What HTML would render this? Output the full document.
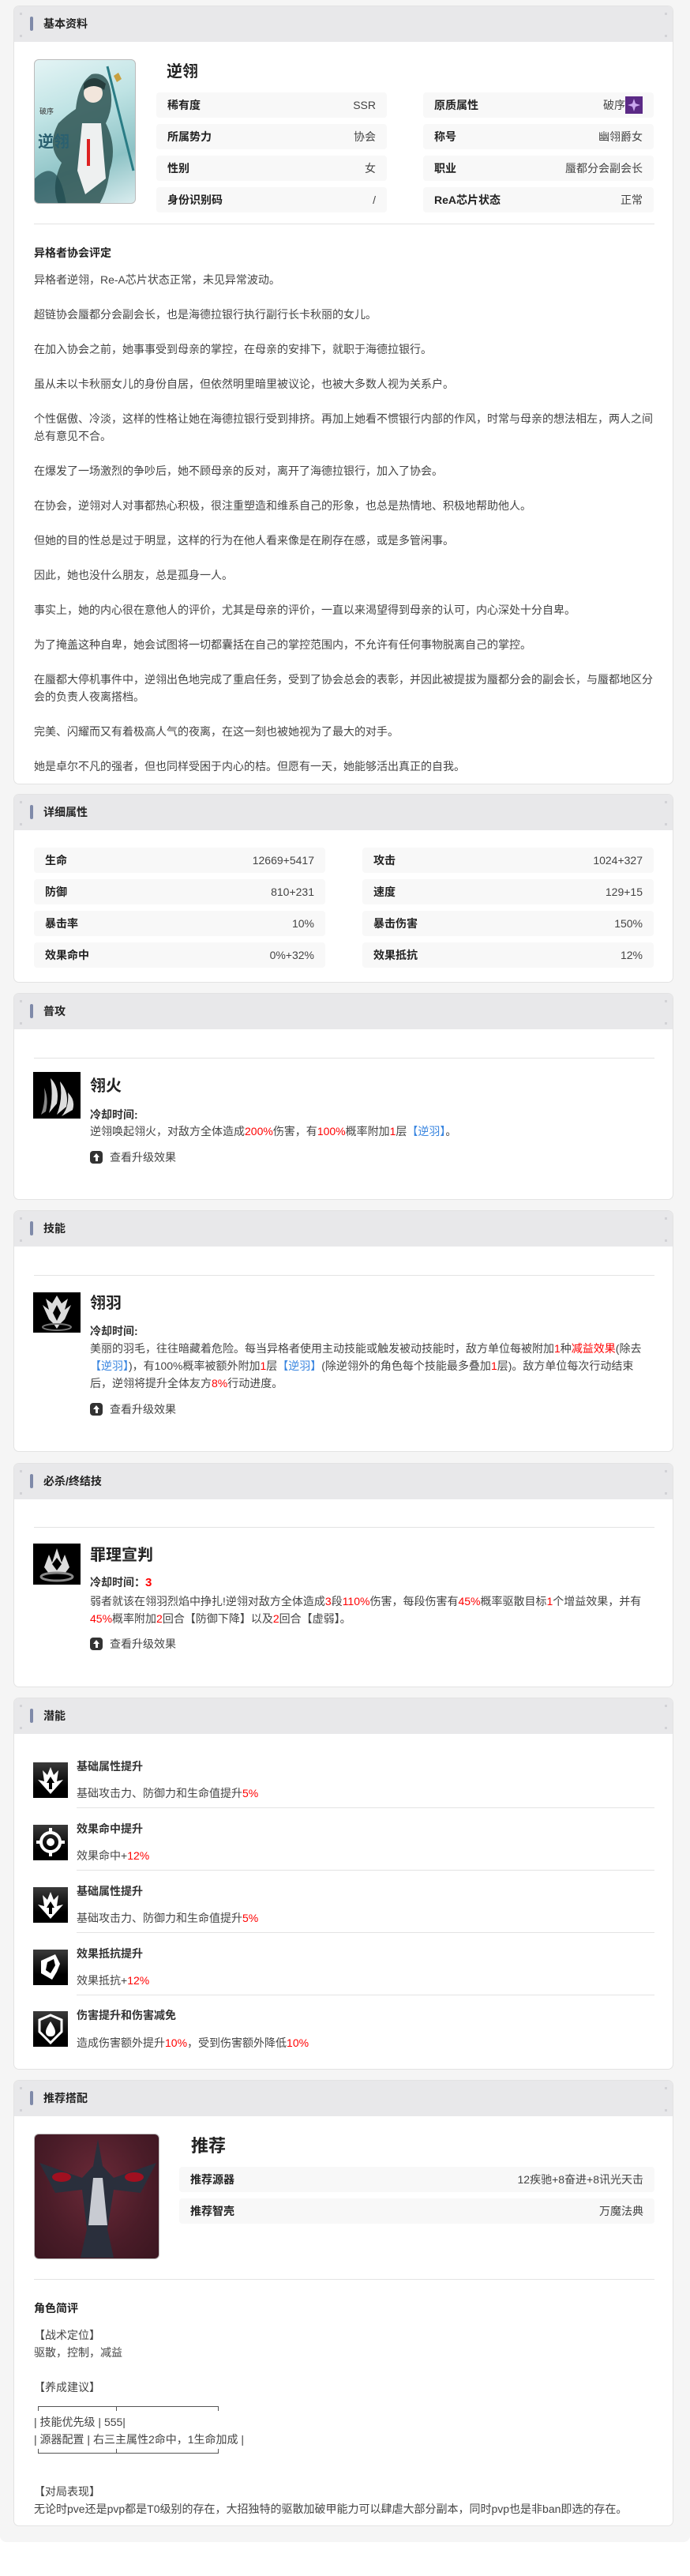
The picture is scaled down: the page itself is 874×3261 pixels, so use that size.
<!DOCTYPE html>
<html><head><meta charset="utf-8">
<style>
*{margin:0;padding:0;box-sizing:border-box}
body{width:874px;height:3261px;background:#fff;font-family:"Liberation Sans","Noto Sans CJK SC",sans-serif;color:#333;position:relative;overflow:hidden}
#bg{position:absolute;left:0;top:0;width:874px;height:3218px;background:#f5f5f5;border-radius:0 0 8px 8px}
.card{position:absolute;left:17px;width:836px;background:#fff;border:1px solid #e3e3e3;border-radius:7px;overflow:hidden}
.hd{position:absolute;left:0;top:0;width:100%;height:45px;background:#e8e8ea}
.hd .bar{position:absolute;left:20px;top:13px;width:4px;height:18px;border-radius:2px;background:#7f8aa9}
.hd .t{position:absolute;left:37px;top:11px;font-size:14px;font-weight:bold;line-height:22px;color:#222}
.hd .d{position:absolute;width:3px;height:3px;background:#d2d2d6}
.a{position:absolute;white-space:nowrap}
.row{position:absolute;height:32px;background:#f8f8f8;border-radius:4px;font-size:14px;line-height:32px}
.row b{position:absolute;left:14px;color:#222}
.row span{position:absolute;right:14px;color:#444}
.p{font-size:14px;line-height:22px;color:#444;white-space:nowrap}
.p div{margin-bottom:22px}
.line{position:absolute;height:1px;background:#e3e3e3}
.icon{position:absolute;background:#000;overflow:hidden}
.name{font-size:20px;font-weight:bold;color:#222;line-height:28px}
.cd{font-size:14px;font-weight:bold;color:#333;line-height:22px}
.desc{font-size:14px;line-height:22px;color:#444}
.r{color:#f00}.bl{color:#3a86e0}
.up{position:absolute;width:16px;height:16px;border-radius:4px;background:#333}
.up:after{content:"";position:absolute;left:4px;top:3px;border-left:4px solid transparent;border-right:4px solid transparent;border-bottom:5px solid #fff}
.up:before{content:"";position:absolute;left:6.5px;top:8px;width:3px;height:5px;background:#fff}
.pt{font-size:14px;font-weight:bold;line-height:22px;color:#333}
.pd{font-size:14px;line-height:22px;color:#444}
.picon{position:absolute;width:44px;height:45px;background:linear-gradient(#3a3a3a,#000 70%)}
</style></head><body>
<div id="bg"></div>

<div class="card" style="top:7px;height:986px">
 <div class="hd"><div class="d" style="left:7px;top:8px"></div><div class="d" style="left:7px;top:36px"></div><div class="d" style="right:7px;top:8px"></div><div class="d" style="right:7px;top:36px"></div><div class="bar"></div><div class="t">基本资料</div></div>
 <div style="position:absolute;left:25px;top:67px;width:129px;height:183px;border:1px solid #bbb;border-radius:6px;overflow:hidden;background:linear-gradient(160deg,#e4f4f5 0%,#bfe3e4 35%,#8ec3c6 70%,#d9ecee 100%)">
  <svg width="129" height="183" viewBox="0 0 129 183"><path d="M72 18 Q92 14 96 38 Q100 60 90 80 Q105 110 95 140 Q92 165 82 182 L30 182 Q20 160 34 130 Q14 110 30 80 Q40 70 52 62 Q55 30 72 18Z" fill="#2f5553" opacity=".85"/><circle cx="74" cy="42" r="12" fill="#f2e6dc"/><path d="M62 30 Q74 16 90 30 L88 38 Q74 28 62 38Z" fill="#263d3c"/><path d="M60 80 L84 80 L90 150 L64 170 L54 140Z" fill="#eef0f0"/><path d="M92 8 L125 140" stroke="#2a7c85" stroke-width="3"/><path d="M100 20 l6 -4 l4 8 l-6 4z" fill="#c8a040"/><rect x="66" y="100" width="4" height="34" fill="#d22"/><text x="6" y="68" font-size="9" fill="#333">破序</text><text x="4" y="110" font-size="20" font-weight="bold" fill="#2a6070">逆翎</text><path d="M0 150 Q30 120 40 183 L0 183Z" fill="#1e4a50" opacity=".7"/></svg>
 </div>
 <div class="a name" style="left:193px;top:69px">逆翎</div>
 <div class="row" style="left:180px;top:109px;width:292px"><b>稀有度</b><span>SSR</span></div>
 <div class="row" style="left:518px;top:109px;width:292px"><b>原质属性</b><span style="right:14px">破序<i style="display:inline-block;width:22px;height:22px;background:#5b2a86;vertical-align:middle;position:relative;top:-1px"><svg width="22" height="22"><path d="M11 3 L13 9 L19 11 L13 13 L11 19 L9 13 L3 11 L9 9Z" fill="#c9a6ee"/></svg></i></span></div>
 <div class="row" style="left:180px;top:149px;width:292px"><b>所属势力</b><span>协会</span></div>
 <div class="row" style="left:518px;top:149px;width:292px"><b>称号</b><span>幽翎爵女</span></div>
 <div class="row" style="left:180px;top:189px;width:292px"><b>性别</b><span>女</span></div>
 <div class="row" style="left:518px;top:189px;width:292px"><b>职业</b><span>蜃都分会副会长</span></div>
 <div class="row" style="left:180px;top:229px;width:292px"><b>身份识别码</b><span>/</span></div>
 <div class="row" style="left:518px;top:229px;width:292px"><b>ReA芯片状态</b><span>正常</span></div>
 <div class="line" style="left:25px;top:275px;width:786px"></div>
 <div class="a" style="left:25px;top:301px;font-size:14px;font-weight:bold;line-height:22px;color:#222">异格者协会评定</div>
 <div class="p" style="position:absolute;left:25px;top:335px;width:800px">
  <div>异格者逆翎，Re-A芯片状态正常，未见异常波动。</div>
  <div>超链协会蜃都分会副会长，也是海德拉银行执行副行长卡秋丽的女儿。</div>
  <div>在加入协会之前，她事事受到母亲的掌控，在母亲的安排下，就职于海德拉银行。</div>
  <div>虽从未以卡秋丽女儿的身份自居，但依然明里暗里被议论，也被大多数人视为关系户。</div>
  <div>个性倨傲、冷淡，这样的性格让她在海德拉银行受到排挤。再加上她看不惯银行内部的作风，时常与母亲的想法相左，两人之间<br>总有意见不合。</div>
  <div>在爆发了一场激烈的争吵后，她不顾母亲的反对，离开了海德拉银行，加入了协会。</div>
  <div>在协会，逆翎对人对事都热心积极，很注重塑造和维系自己的形象，也总是热情地、积极地帮助他人。</div>
  <div>但她的目的性总是过于明显，这样的行为在他人看来像是在刷存在感，或是多管闲事。</div>
  <div>因此，她也没什么朋友，总是孤身一人。</div>
  <div>事实上，她的内心很在意他人的评价，尤其是母亲的评价，一直以来渴望得到母亲的认可，内心深处十分自卑。</div>
  <div>为了掩盖这种自卑，她会试图将一切都囊括在自己的掌控范围内，不允许有任何事物脱离自己的掌控。</div>
  <div>在蜃都大停机事件中，逆翎出色地完成了重启任务，受到了协会总会的表彰，并因此被提拔为蜃都分会的副会长，与蜃都地区分<br>会的负责人夜离搭档。</div>
  <div>完美、闪耀而又有着极高人气的夜离，在这一刻也被她视为了最大的对手。</div>
  <div>她是卓尔不凡的强者，但也同样受困于内心的桔。但愿有一天，她能够活出真正的自我。</div>
 </div>
</div>

<div class="card" style="top:1005px;height:239px">
 <div class="hd"><div class="d" style="left:7px;top:8px"></div><div class="d" style="left:7px;top:36px"></div><div class="d" style="right:7px;top:8px"></div><div class="d" style="right:7px;top:36px"></div><div class="bar"></div><div class="t">详细属性</div></div>
 <div class="row" style="left:25px;top:67px;width:369px"><b>生命</b><span>12669+5417</span></div>
 <div class="row" style="left:441px;top:67px;width:369px"><b>攻击</b><span>1024+327</span></div>
 <div class="row" style="left:25px;top:107px;width:369px"><b>防御</b><span>810+231</span></div>
 <div class="row" style="left:441px;top:107px;width:369px"><b>速度</b><span>129+15</span></div>
 <div class="row" style="left:25px;top:147px;width:369px"><b>暴击率</b><span>10%</span></div>
 <div class="row" style="left:441px;top:147px;width:369px"><b>暴击伤害</b><span>150%</span></div>
 <div class="row" style="left:25px;top:187px;width:369px"><b>效果命中</b><span>0%+32%</span></div>
 <div class="row" style="left:441px;top:187px;width:369px"><b>效果抵抗</b><span>12%</span></div>
</div>

<div class="card" style="top:1257px;height:262px">
 <div class="hd"><div class="d" style="left:7px;top:8px"></div><div class="d" style="left:7px;top:36px"></div><div class="d" style="right:7px;top:8px"></div><div class="d" style="right:7px;top:36px"></div><div class="bar"></div><div class="t">普攻</div></div>
 <div class="line" style="left:25px;top:81px;width:786px"></div>
 <div class="icon" style="left:24px;top:99px;width:60px;height:59px"><svg width="60" height="59"><path d="M22 8 Q34 20 30 40 L20 52 Q26 34 22 8Z M34 12 Q46 26 42 44 L30 54 Q38 34 34 12Z M44 26 Q54 36 50 48 L36 56 Q46 44 44 26Z" fill="#ddd"/><path d="M14 20 Q20 34 16 50 L10 54 Q16 38 14 20Z" fill="#888"/></svg></div>
 <div class="a name" style="left:96px;top:103px">翎火</div>
 <div class="a cd" style="left:96px;top:142px">冷却时间:</div>
 <div class="a desc" style="left:96px;top:163px">逆翎唤起翎火，对敌方全体造成<span class="r">200%</span>伤害，有<span class="r">100%</span>概率附加<span class="r">1</span>层<span class="bl">【逆羽】</span>。</div>
 <div class="up" style="left:96px;top:199px"></div>
 <div class="a desc" style="left:121px;top:196px">查看升级效果</div>
</div>

<div class="card" style="top:1532px;height:306px">
 <div class="hd"><div class="d" style="left:7px;top:8px"></div><div class="d" style="left:7px;top:36px"></div><div class="d" style="right:7px;top:8px"></div><div class="d" style="right:7px;top:36px"></div><div class="bar"></div><div class="t">技能</div></div>
 <div class="line" style="left:25px;top:81px;width:786px"></div>
 <div class="icon" style="left:24px;top:103px;width:60px;height:51px"><svg width="60" height="51"><path d="M30 4 L36 14 L44 8 L40 22 L48 16 L40 34 L34 40 L30 46 L26 40 L20 34 L12 16 L20 22 L16 8 L24 14Z" fill="#ddd"/><path d="M30 16 L35 26 L30 36 L25 26Z" fill="#000"/><ellipse cx="30" cy="44" rx="18" ry="4" fill="none" stroke="#777" stroke-width="2"/></svg></div>
 <div class="a name" style="left:96px;top:103px">翎羽</div>
 <div class="a cd" style="left:96px;top:141px">冷却时间:</div>
 <div class="a desc" style="left:96px;top:163px">美丽的羽毛，往往暗藏着危险。每当异格者使用主动技能或触发被动技能时，敌方单位每被附加<span class="r">1</span>种<span class="r">减益效果</span>(除去<br><span class="bl">【逆羽】</span>)，有100%概率被额外附加<span class="r">1</span>层<span class="bl">【逆羽】</span>(除逆翎外的角色每个技能最多叠加<span class="r">1</span>层)。敌方单位每次行动结束<br>后，逆翎将提升全体友方<span class="r">8%</span>行动进度。</div>
 <div class="up" style="left:96px;top:243px"></div>
 <div class="a desc" style="left:121px;top:240px">查看升级效果</div>
</div>

<div class="card" style="top:1852px;height:284px">
 <div class="hd"><div class="d" style="left:7px;top:8px"></div><div class="d" style="left:7px;top:36px"></div><div class="d" style="right:7px;top:8px"></div><div class="d" style="right:7px;top:36px"></div><div class="bar"></div><div class="t">必杀/终结技</div></div>
 <div class="line" style="left:25px;top:80px;width:786px"></div>
 <div class="icon" style="left:24px;top:101px;width:60px;height:52px"><svg width="60" height="52"><path d="M14 30 L20 14 L24 24 L30 6 L36 24 L40 14 L46 30 L40 38 L20 38Z" fill="#ddd"/><path d="M24 26 L30 18 L36 26 L30 34Z" fill="#000"/><ellipse cx="30" cy="42" rx="20" ry="5" fill="none" stroke="#888" stroke-width="3"/></svg></div>
 <div class="a name" style="left:96px;top:102px">罪理宣判</div>
 <div class="a cd" style="left:96px;top:139px">冷却时间：<span class="r" style="font-size:15px">3</span></div>
 <div class="a desc" style="left:96px;top:163px">弱者就该在翎羽烈焰中挣扎!逆翎对敌方全体造成<span class="r">3</span>段<span class="r">110%</span>伤害，每段伤害有<span class="r">45%</span>概率驱散目标<span class="r">1</span>个增益效果，并有<br><span class="r">45%</span>概率附加<span class="r">2</span>回合【防御下降】以及<span class="r">2</span>回合【虚弱】。</div>
 <div class="up" style="left:96px;top:220px"></div>
 <div class="a desc" style="left:121px;top:217px">查看升级效果</div>
</div>

<div class="card" style="top:2149px;height:471px">
 <div class="hd"><div class="d" style="left:7px;top:8px"></div><div class="d" style="left:7px;top:36px"></div><div class="d" style="right:7px;top:8px"></div><div class="d" style="right:7px;top:36px"></div><div class="bar"></div><div class="t">潜能</div></div>
 <div class="picon" style="left:24px;top:81px"><svg width="44" height="45"><path d="M22 6 L26 16 L32 10 L30 24 L38 22 L22 40 L6 22 L14 24 L12 10 L18 16Z" fill="#fff"/><path d="M22 18 L27 26 L24 26 L24 34 L20 34 L20 26 L17 26Z" fill="#000"/></svg></div>
 <div class="a pt" style="left:79px;top:75px">基础属性提升</div>
 <div class="a pd" style="left:79px;top:109px">基础攻击力、防御力和生命值提升<span class="r">5%</span></div>
 <div class="line" style="left:79px;top:138px;width:732px"></div>
 <div class="picon" style="left:24px;top:160px"><svg width="44" height="45"><circle cx="22" cy="22" r="12" fill="none" stroke="#fff" stroke-width="4"/><circle cx="22" cy="22" r="5" fill="#fff"/><path d="M22 4v8M22 32v8M4 22h8M32 22h8" stroke="#fff" stroke-width="4"/></svg></div>
 <div class="a pt" style="left:79px;top:154px">效果命中提升</div>
 <div class="a pd" style="left:79px;top:188px">效果命中+<span class="r">12%</span></div>
 <div class="line" style="left:79px;top:217px;width:732px"></div>
 <div class="picon" style="left:24px;top:239px"><svg width="44" height="45"><path d="M22 6 L26 16 L32 10 L30 24 L38 22 L22 40 L6 22 L14 24 L12 10 L18 16Z" fill="#fff"/><path d="M22 18 L27 26 L24 26 L24 34 L20 34 L20 26 L17 26Z" fill="#000"/></svg></div>
 <div class="a pt" style="left:79px;top:233px">基础属性提升</div>
 <div class="a pd" style="left:79px;top:267px">基础攻击力、防御力和生命值提升<span class="r">5%</span></div>
 <div class="line" style="left:79px;top:296px;width:732px"></div>
 <div class="picon" style="left:24px;top:318px"><svg width="44" height="45"><path d="M10 14 L28 6 L34 18 L30 28 L24 38 L10 30Z" fill="#fff"/><path d="M18 16 L26 12 L28 20 L22 30 L16 26Z" fill="#000"/></svg></div>
 <div class="a pt" style="left:79px;top:312px">效果抵抗提升</div>
 <div class="a pd" style="left:79px;top:346px">效果抵抗+<span class="r">12%</span></div>
 <div class="line" style="left:79px;top:375px;width:732px"></div>
 <div class="picon" style="left:24px;top:396px"><svg width="44" height="45"><path d="M22 5 L36 11 L36 26 L22 40 L8 26 L8 11Z" fill="none" stroke="#fff" stroke-width="3"/><path d="M22 13 Q28 22 28 26 Q28 32 22 32 Q16 32 16 26 Q16 22 22 13Z" fill="#fff"/></svg></div>
 <div class="a pt" style="left:79px;top:390px">伤害提升和伤害减免</div>
 <div class="a pd" style="left:79px;top:425px">造成伤害额外提升<span class="r">10%</span>，受到伤害额外降低<span class="r">10%</span></div>
</div>

<div class="card" style="top:2633px;height:565px">
 <div class="hd"><div class="d" style="left:7px;top:8px"></div><div class="d" style="left:7px;top:36px"></div><div class="d" style="right:7px;top:8px"></div><div class="d" style="right:7px;top:36px"></div><div class="bar"></div><div class="t">推荐搭配</div></div>
 <div style="position:absolute;left:25px;top:67px;width:159px;height:159px;border:1px solid #bbb;border-radius:6px;overflow:hidden;background:radial-gradient(ellipse at 50% 40%,#6b2a38,#4a1c28 60%,#3a1620)">
  <svg width="159" height="159"><path d="M80 6 L74 40 L60 55 L6 36 L26 74 L60 70 L66 120 L58 156 L100 156 L92 120 L100 70 L134 74 L154 36 L100 55 L86 40Z" fill="#2a2f3c"/><path d="M74 55 L86 55 L92 115 L68 115Z" fill="#c8cbd2"/><ellipse cx="34" cy="54" rx="12" ry="6" fill="#a01020"/><ellipse cx="126" cy="54" rx="12" ry="6" fill="#a01020"/></svg>
 </div>
 <div class="a" style="left:224px;top:68px;font-size:22px;font-weight:bold;line-height:30px;color:#222">推荐</div>
 <div class="row" style="left:209px;top:109px;width:602px"><b>推荐源器</b><span>12疾驰+8奋进+8讯光天击</span></div>
 <div class="row" style="left:209px;top:149px;width:602px"><b>推荐智壳</b><span>万魔法典</span></div>
 <div class="line" style="left:25px;top:251px;width:786px"></div>
 <div class="a" style="left:25px;top:277px;font-size:14px;font-weight:bold;line-height:22px;color:#222">角色简评</div>
 <div class="a pd" style="left:25px;top:311px">【战术定位】</div>
 <div class="a pd" style="left:25px;top:333px">驱散，控制，减益</div>
 <div class="a pd" style="left:25px;top:377px">【养成建议】</div>
 <div style="position:absolute;left:30px;top:412px;width:229px;height:6px;border-top:1px solid #555;border-left:1px solid #555;border-right:1px solid #555"></div>
 <div style="position:absolute;left:129px;top:412px;width:1px;height:6px;background:#555"></div>
 <div class="a pd" style="left:25px;top:421px">| 技能优先级 | 555|</div>
 <div class="a pd" style="left:25px;top:443px">| 源器配置 | 右三主属性2命中，1生命加成 |</div>
 <div style="position:absolute;left:30px;top:466px;width:229px;height:6px;border-bottom:1px solid #555;border-left:1px solid #555;border-right:1px solid #555"></div>
 <div style="position:absolute;left:129px;top:466px;width:1px;height:6px;background:#555"></div>
 <div class="a pd" style="left:25px;top:509px">【对局表现】</div>
 <div class="a pd" style="left:25px;top:531px">无论时pve还是pvp都是T0级别的存在，大招独特的驱散加破甲能力可以肆虐大部分副本，同时pvp也是非ban即选的存在。</div>
</div>
</body></html>
